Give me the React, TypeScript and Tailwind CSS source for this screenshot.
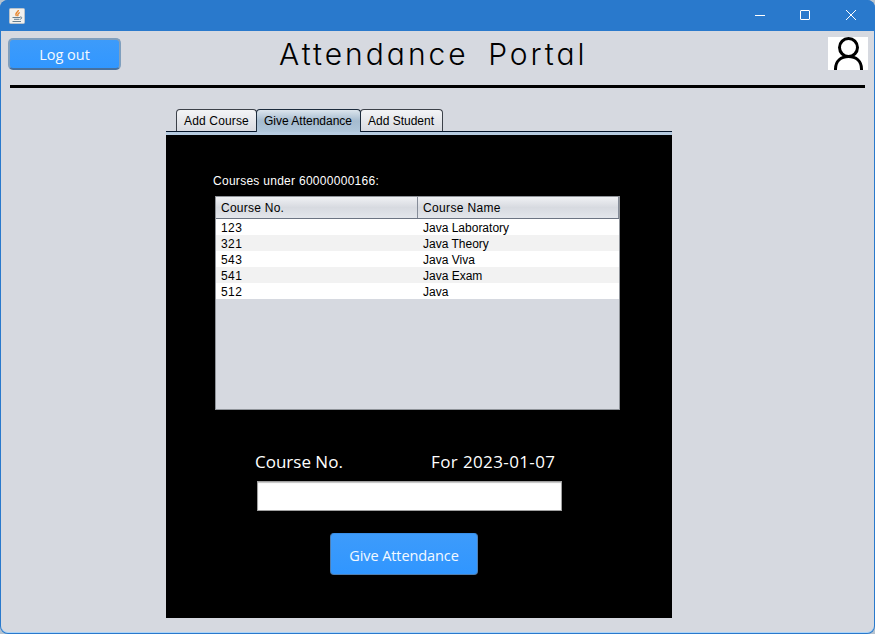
const courses = [
  ["123", "Java Laboratory"],
  ["321", "Java Theory"],
  ["543", "Java Viva"],
  ["541", "Java Exam"],
  ["512", "Java"],
];

function JavaIcon() {
  return (
    <svg width="16" height="16" viewBox="0 0 16 16" fill="none">
      <rect x="0.5" y="0.5" width="15" height="15" rx="1" fill="#f1f0ed" stroke="#b9c3cc" />
      <path d="M9.500 2C9.500 4 5 5 7.500 8M10.800 4.500C8.500 5.500 8.300 6.500 9 8.300" stroke="#e8862e" strokeWidth="1.3" />
      <path d="M3.500 9.500h7.500M5 11.300h5M3.500 13.500h8.500M11 9c2.500-.5 2.300 2-.4 2.400" stroke="#557287" strokeWidth="0.9" />
    </svg>
  );
}

function TitleBar() {
  return (
    <div className="flex h-[31px] items-center bg-[#2979cc] pl-[9px]">
      <JavaIcon />
      <svg className="ml-auto" width="121" height="31" viewBox="754 0 121 31" fill="none" stroke="#fff">
        <path d="M755 15.5h10" />
        <rect x="800.5" y="10.5" width="9" height="9" rx="0.5" />
        <path d="M846 10l10 10M856 10l-10 10" />
      </svg>
    </div>
  );
}

function Header() {
  return (
    <div className="flex h-[54px] items-start pl-[7px] pr-[6px] pt-[6px]">
      <button className="mt-px flex h-[32px] w-[113px] items-center justify-center rounded-[5px] border-2 border-[#7f9fbe] border-b-[#47719f] bg-gradient-to-b from-[#3d9bfa] to-[#3197ff] pt-px font-['Open_Sans',sans-serif] text-[14.5px] text-[#f3f9ff]">
        Log out
      </button>
      <h1 className="-mt-[2px] ml-[158px] whitespace-nowrap font-['Inter',sans-serif] text-[30px] font-light leading-[38px] tracking-[3px] text-black [font-feature-settings:'cv11'] [word-spacing:8px]">
        Attendance Portal
      </h1>
      <svg className="ml-auto" width="40" height="33" viewBox="0 0 40 33" fill="none" stroke="#000" strokeWidth="3">
        <rect width="40" height="33" fill="#fff" stroke="none" />
        <circle cx="20.5" cy="10.5" r="9" />
        <path d="M7.5 33v-1C7.5 24 13 19.5 20.5 19.5S33.500 24 33.500 32v1" />
      </svg>
    </div>
  );
}

function Tabs() {
  return (
    <div className="flex h-[22px] pl-[10px] text-[12px] leading-[22px] text-black">
      <div className="w-[81px] rounded-t-[4px] border border-b-0 border-[#3c4149] bg-gradient-to-b from-[#f3f4f6] to-[#d9dbe1] text-center tracking-[0.15px]">Add Course</div>
      <div className="z-10 -ml-px h-[23px] w-[105px] rounded-t-[4px] border border-b-0 border-[#1c2b3c] bg-gradient-to-b from-[#dce5ed] via-[#a5bbcf] to-[#b0c6da] pr-px text-center">Give Attendance</div>
      <div className="-ml-px w-[83px] rounded-t-[4px] border border-b-0 border-[#3c4149] bg-gradient-to-b from-[#f3f4f6] to-[#d9dbe1] pr-px text-center">Add Student</div>
    </div>
  );
}

function CourseTable() {
  return (
    <div className="ml-[49px] mt-[7px] h-[214px] w-[405px] border border-[#8f9399] bg-[#d6d9e0]">
      <div className="flex h-[22px] border-b border-[#6c7482] bg-gradient-to-b from-[#f0f1f4] via-[#d7dae0] to-[#e3e6eb] leading-[22px]">
        <div className="w-[202px] border-r border-[#858c98] pl-[5px] tracking-[0.25px]">Course No.</div>
        <div className="flex-1 border-r border-[#858c98] pl-[5px] tracking-[0.35px]">Course Name</div>
      </div>
      {courses.map(([no, name]) => (
        <div key={no} className="flex h-[16px] bg-white leading-[18px] odd:bg-[#f2f2f2]">
          <div className="w-[202px] pl-[5px] tracking-[0.4px]">{no}</div>
          <div className="pl-[5px]">{name}</div>
        </div>
      ))}
    </div>
  );
}

export default function App() {
  return (
    <div className="h-[634px] w-[875px] overflow-hidden bg-[#b6c3cf] font-['Liberation_Sans',Arial,sans-serif]">
      <div className="flex h-full flex-col overflow-hidden rounded-[8px] bg-[#2979cc]">
        <TitleBar />
        <div className="mx-px mb-px flex-1 rounded-b-[7px] border-b border-[#acd4f8] bg-[#d6d9e0]">
          <Header />
          <div className="mx-[9px] h-[3px] bg-black" />
          <div className="ml-[165px] mt-[21px] w-[506px]">
            <Tabs />
            <div className="h-[4px] border-t border-[#06162b] bg-[#b6cbe0]" />
            <div className="h-[483px] bg-black pt-[38px] text-[12px]">
              <p className="pl-[47px] leading-[16px] tracking-[0.28px] text-white">Courses under 60000000166:</p>
              <CourseTable />
              <div className="mt-[40px] flex pl-[89px] font-['Open_Sans',sans-serif] text-[17px] leading-[24px] text-white">
                <span className="w-[176px]">Course No.</span>
                <span className="tracking-[0.38px]">For 2023-01-07</span>
              </div>
              <input className="ml-[91px] mt-[7px] block h-[30px] w-[305px] border border-[#a0a0a0] bg-white shadow-[inset_0_1px_1px_#c4c4c4] outline-none" />
              <button className="ml-[164px] mt-[22px] flex h-[42px] w-[148px] items-center justify-center rounded-[4px] border border-[#507eaf] border-t-[#388ee8] bg-gradient-to-b from-[#3d9bfb] to-[#3096ff] pt-[3px] font-['Open_Sans',sans-serif] text-[14.5px] tracking-[-0.08px] text-[#f3f9ff]">
                Give Attendance
              </button>
            </div>
          </div>
        </div>
      </div>
    </div>
  );
}
